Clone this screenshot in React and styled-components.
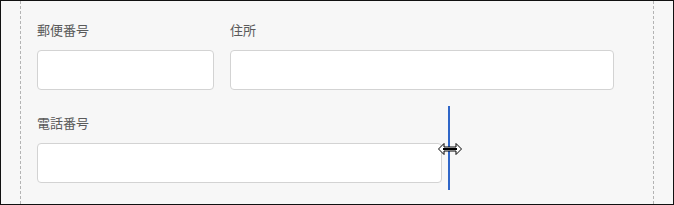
import React from "react"
import styled, { createGlobalStyle } from "styled-components"

const GlobalStyle = createGlobalStyle`
  html, body {
    margin: 0;
    padding: 0;
    background: #ffffff;
  }
  * {
    box-sizing: border-box;
  }
`

const Frame = styled.div`
  width: 674px;
  height: 205px;
  border: 1px solid #111;
  background: #f7f7f7;
  padding: 0 19px;
  font-family: "Noto Sans CJK JP", "Noto Sans", sans-serif;
  overflow: hidden;
`

const Column = styled.div`
  height: 100%;
  border-left: 1px dashed #b4b4b4;
  border-right: 1px dashed #b4b4b4;
  padding: 20px 16px 0;
  display: flex;
  flex-direction: column;
  gap: 24px;
`

const Row = styled.div`
  display: flex;
  gap: 16px;
`

const Field = styled.div`
  position: relative;
  width: ${({ width }) => width}px;
  display: flex;
  flex-direction: column;
  gap: 11px;
`

const Label = styled.label`
  font-size: 13px;
  line-height: 18px;
  color: #5a5a5a;
`

const Input = styled.input`
  height: 40px;
  width: 100%;
  border: 1px solid #d3d3d3;
  border-radius: 4px;
  background: #fff;
  outline: none;
`

const ResizeLine = styled.div`
  position: absolute;
  top: -8px;
  bottom: -7px;
  right: -8px;
  width: 2px;
  background: #2f66c8;
`

const Cursor = styled.svg`
  position: absolute;
  top: 29px;
  right: -20px;
`

const ResizeCursor = () => (
  <Cursor width="24" height="12" viewBox="0 0 24 12">
    <path
      d="M0.5 6 L6 0.5 L6 4 L18 4 L18 0.5 L23.5 6 L18 11.5 L18 8 L6 8 L6 11.5 Z"
      fill="#fff"
      stroke="#000"
      strokeWidth="1"
    />
    <rect x="5" y="5" width="14" height="2" fill="#000" />
  </Cursor>
)

export default function App() {
  return (
    <>
      <GlobalStyle />
      <Frame>
        <Column>
          <Row>
            <Field width={177}>
              <Label>郵便番号</Label>
              <Input />
            </Field>
            <Field width={384}>
              <Label>住所</Label>
              <Input />
            </Field>
          </Row>
          <Row>
            <Field width={405}>
              <Label>電話番号</Label>
              <Input />
              <ResizeLine />
              <ResizeCursor />
            </Field>
          </Row>
        </Column>
      </Frame>
    </>
  )
}
